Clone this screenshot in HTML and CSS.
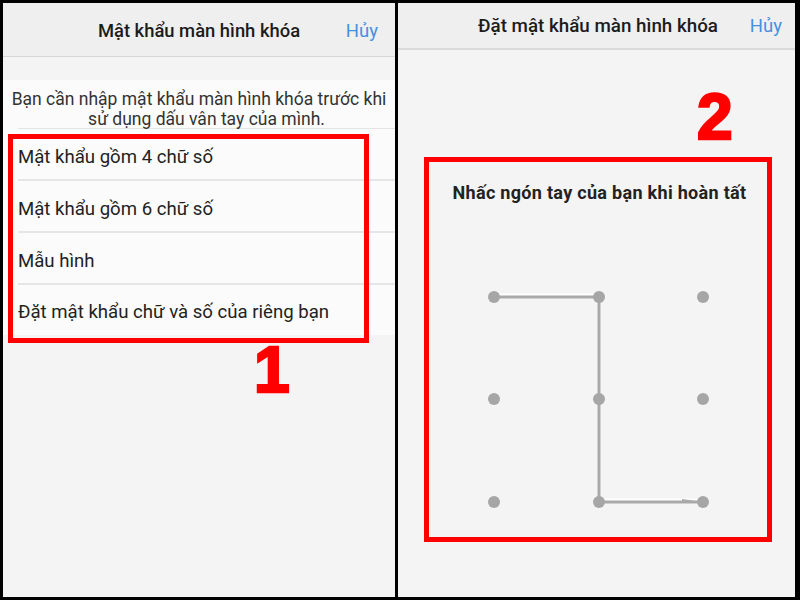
FILE: index.html
```html
<!DOCTYPE html>
<html lang="vi">
<head>
<meta charset="utf-8">
<title>Mật khẩu màn hình khóa</title>
<link rel="stylesheet" href="styles.css">
</head>
<body>
<div class="frame">
  <section class="panel panel-left">
    <header class="nav nav-tall">
      <span></span>
      <h1 class="nav-title">Mật khẩu màn hình khóa</h1>
      <a class="nav-action">Hủy</a>
    </header>
    <div class="gap"></div>
    <div class="sheet">
      <p class="note">Bạn cần nhập mật khẩu màn hình khóa trước khi<br>sử dụng dấu vân tay của mình.</p>
      <ul class="options">
        <li class="option">Mật khẩu gồm 4 chữ số</li>
        <li class="option">Mật khẩu gồm 6 chữ số</li>
        <li class="option">Mẫu hình</li>
        <li class="option">Đặt mật khẩu chữ và số của riêng bạn</li>
      </ul>
    </div>
    <div class="mark mark-options"></div>
    <span class="step step-one">1</span>
  </section>

  <section class="panel panel-right">
    <header class="nav nav-short">
      <span></span>
      <h1 class="nav-title">Đặt mật khẩu màn hình khóa</h1>
      <a class="nav-action">Hủy</a>
    </header>
    <div class="pattern-body">
      <p class="prompt">Nhấc ngón tay của bạn khi hoàn tất</p>
      <svg class="pattern" width="397" height="260" viewBox="0 0 397 260">
        <!-- traced path: top-left → top-middle → bottom-middle → bottom-right -->
        <polyline points="96,27 201,27 201,232 305,232" fill="none" stroke="#ffffff" stroke-width="3" transform="translate(0,-2)" opacity="0.9"/>
        <polyline points="96,27 201,27 201,232 305,232" fill="none" stroke="#a9a9a9" stroke-width="3" stroke-linejoin="round"/>
        <polygon points="284,229 298,231 284,232" fill="#a9a9a9"/>
        <g fill="#a6a6a6">
          <circle cx="96" cy="27" r="6"/>
          <circle cx="201" cy="27" r="6"/>
          <circle cx="305" cy="27" r="6"/>
          <circle cx="96" cy="129" r="6"/>
          <circle cx="201" cy="129" r="6"/>
          <circle cx="305" cy="129" r="6"/>
          <circle cx="96" cy="232" r="6"/>
          <circle cx="201" cy="232" r="6"/>
          <circle cx="305" cy="232" r="6"/>
        </g>
      </svg>
    </div>
    <div class="mark mark-pattern"></div>
    <span class="step step-two">2</span>
  </section>
</div>
</body>
</html>
```

FILE: styles.css
```css
* {
  box-sizing: border-box;
}

html,
body {
  margin: 0;
  padding: 0;
  background: #000;
}

body {
  font-family: Roboto, "Noto Sans", "DejaVu Sans", sans-serif;
  color: #222;
}

.frame {
  width: 800px;
  height: 600px;
  display: grid;
  grid-template-columns: 392px 397px;
  column-gap: 3px;
  padding: 3px 0 3px 3px;
  background: #000;
}

.panel {
  position: relative;
  display: flex;
  flex-direction: column;
  background: #f4f4f4;
  overflow: hidden;
}

/* navigation bar */
.nav {
  display: grid;
  grid-template-columns: 1fr auto 1fr;
  align-items: center;
  background: #efefef;
  flex: none;
}

.nav-tall {
  height: 54px;
  border-bottom: 1px solid #d6d6d6;
  padding: 2px 17px 0;
}

.nav-short {
  height: 47px;
  border-bottom: 2px solid #dadada;
  padding: 0 13px;
}

.nav-title {
  margin: 0;
  font-size: 18.4px;
  font-weight: 500;
  color: #1c1c1c;
  white-space: nowrap;
}

.nav-short .nav-title {
  font-size: 18.8px;
  margin-left: 3px;
}

.nav-action {
  justify-self: end;
  font-size: 18.5px;
  color: #4590e3;
}

/* left screen */
.gap {
  height: 23px;
  flex: none;
}

.sheet {
  background: #fbfbfb;
  height: 255px;
  flex: none;
}

.note {
  margin: 0 0 0 15px;
  padding: 9px 0 0;
  height: 49px;
  text-align: center;
  font-size: 17.5px;
  line-height: 20px;
  color: #333;
  border-bottom: 1px solid #e4e4e4;
  text-indent: -15px;
  white-space: nowrap;
}

.options {
  list-style: none;
  margin: 0;
  padding: 0 0 0 15px;
}

.option {
  height: 52px;
  display: flex;
  align-items: center;
  padding-top: 5px;
  font-size: 18.6px;
  color: #222;
  border-bottom: 2px solid #e6e6e6;
}

.option:last-child {
  border-bottom: none;
  padding-top: 2px;
}

/* right screen */
.pattern-body {
  display: flex;
  flex-direction: column;
  align-items: center;
}

.prompt {
  margin: 133px 0 0;
  font-size: 18px;
  line-height: 20px;
  font-weight: 700;
  letter-spacing: 0.3px;
  color: #222;
  padding-left: 6px;
  white-space: nowrap;
}

.pattern {
  display: block;
  margin-top: 67px;
}

/* red annotation marks */
.mark {
  position: absolute;
  border: 5px solid #ff0000;
}

.mark-options {
  left: 5px;
  top: 131px;
  width: 361px;
  height: 209px;
}

.mark-pattern {
  left: 26px;
  top: 154px;
  width: 348px;
  height: 385px;
}

.step {
  position: absolute;
  font-family: "Liberation Sans", Arial, sans-serif;
  font-weight: 700;
  font-size: 64px;
  line-height: 64px;
  color: #ff0000;
  -webkit-text-stroke: 2.5px #ff0000;
}

.step-one {
  left: 251px;
  top: 335px;
}

.step-two {
  left: 299px;
  top: 82px;
}
```
